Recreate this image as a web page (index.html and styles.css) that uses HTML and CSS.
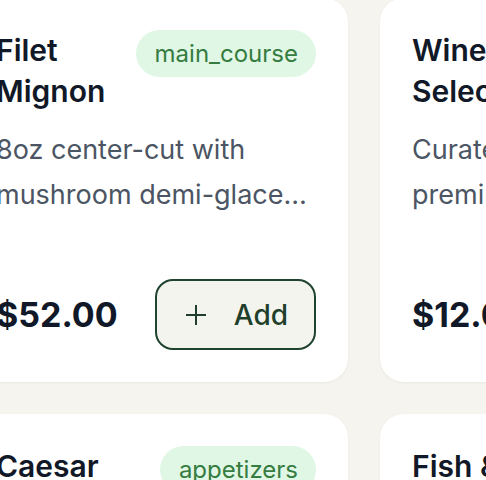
FILE: index.html
```html
<!DOCTYPE html>
<html lang="en">
<head>
<meta charset="utf-8">
<title>Menu</title>
<link rel="stylesheet" href="styles.css">
</head>
<body>
<main class="menu">
  <article class="card">
    <div class="card-head">
      <h3 class="title">Filet Mignon</h3>
      <span class="tag">main_course</span>
    </div>
    <p class="desc">8oz center-cut with mushroom demi-glace and roasted seasonal vegetables</p>
    <div class="card-foot">
      <span class="price">$52.00</span>
      <button class="add-btn" type="button">
        <svg class="plus" viewBox="0 0 24 24" width="24" height="24" aria-hidden="true"><path d="M12 2v20M2 12h20" stroke="currentColor" stroke-width="2" fill="none"/></svg>
        <span>Add</span>
      </button>
    </div>
  </article>
  <article class="card">
    <div class="card-head">
      <h3 class="title">Wine Selection</h3>
      <span class="tag">beverages</span>
    </div>
    <p class="desc">Curated glasses from premium vineyards around the world</p>
    <div class="card-foot">
      <span class="price">$12.00</span>
      <button class="add-btn" type="button">
        <svg class="plus" viewBox="0 0 24 24" width="24" height="24" aria-hidden="true"><path d="M12 2v20M2 12h20" stroke="currentColor" stroke-width="2" fill="none"/></svg>
        <span>Add</span>
      </button>
    </div>
  </article>
  <article class="card">
    <div class="card-head">
      <h3 class="title">Caesar Salad</h3>
      <span class="tag">appetizers</span>
    </div>
    <p class="desc">Crisp romaine, parmesan, garlic croutons and house-made dressing</p>
    <div class="card-foot">
      <span class="price">$14.00</span>
      <button class="add-btn" type="button">
        <svg class="plus" viewBox="0 0 24 24" width="24" height="24" aria-hidden="true"><path d="M12 2v20M2 12h20" stroke="currentColor" stroke-width="2" fill="none"/></svg>
        <span>Add</span>
      </button>
    </div>
  </article>
  <article class="card">
    <div class="card-head">
      <h3 class="title">Fish &amp; Chips</h3>
      <span class="tag">main_course</span>
    </div>
    <p class="desc">Beer-battered cod with hand-cut fries and tartar sauce</p>
    <div class="card-foot">
      <span class="price">$24.00</span>
      <button class="add-btn" type="button">
        <svg class="plus" viewBox="0 0 24 24" width="24" height="24" aria-hidden="true"><path d="M12 2v20M2 12h20" stroke="currentColor" stroke-width="2" fill="none"/></svg>
        <span>Add</span>
      </button>
    </div>
  </article>
</main>
</body>
</html>
```
FILE: styles.css
```css
html, body {
  margin: 0;
  padding: 0;
  background: #f5f4ef;
  overflow: hidden;
}

body {
  font-family: Inter, "Noto Sans", "DejaVu Sans", sans-serif;
  color: #111827;
}

.menu {
  display: grid;
  grid-template-columns: repeat(2, 384px);
  gap: 32px;
  margin: -2px 0 0 -36px;
}

.card {
  background: #ffffff;
  border-radius: 24px;
  box-shadow: 0 1px 3px rgba(0, 0, 0, 0.05);
  padding: 32px;
  min-height: 384px;
  box-sizing: border-box;
  display: flex;
  flex-direction: column;
}

.card-head {
  display: flex;
  justify-content: space-between;
  align-items: flex-start;
  gap: 16px;
}

.title {
  margin: 0;
  font-size: 30px;
  line-height: 41px;
  font-weight: 600;
  color: #111827;
}

.tag {
  flex: none;
  background: #e1f7e6;
  color: #357c40;
  font-size: 24px;
  line-height: 47px;
  padding: 0 18px 0 19px;
  border-radius: 999px;
}

.desc {
  margin: 15px 0 0;
  font-size: 27px;
  line-height: 45px;
  color: #4b5563;
  display: -webkit-box;
  -webkit-line-clamp: 2;
  -webkit-box-orient: vertical;
  overflow: hidden;
}

.card-foot {
  margin-top: auto;
  display: flex;
  justify-content: space-between;
  align-items: center;
}

.price {
  font-size: 34px;
  font-weight: 700;
  color: #111827;
}

.add-btn {
  display: flex;
  align-items: center;
  gap: 26px;
  height: 71px;
  padding: 0 26px 0 27px;
  box-sizing: border-box;
  background: #f4f4ef;
  border: 2px solid #1f432e;
  border-radius: 18px;
  color: #1f3f2b;
  font-family: inherit;
  font-size: 28px;
  font-weight: 500;
}

.plus {
  display: block;
}
```
